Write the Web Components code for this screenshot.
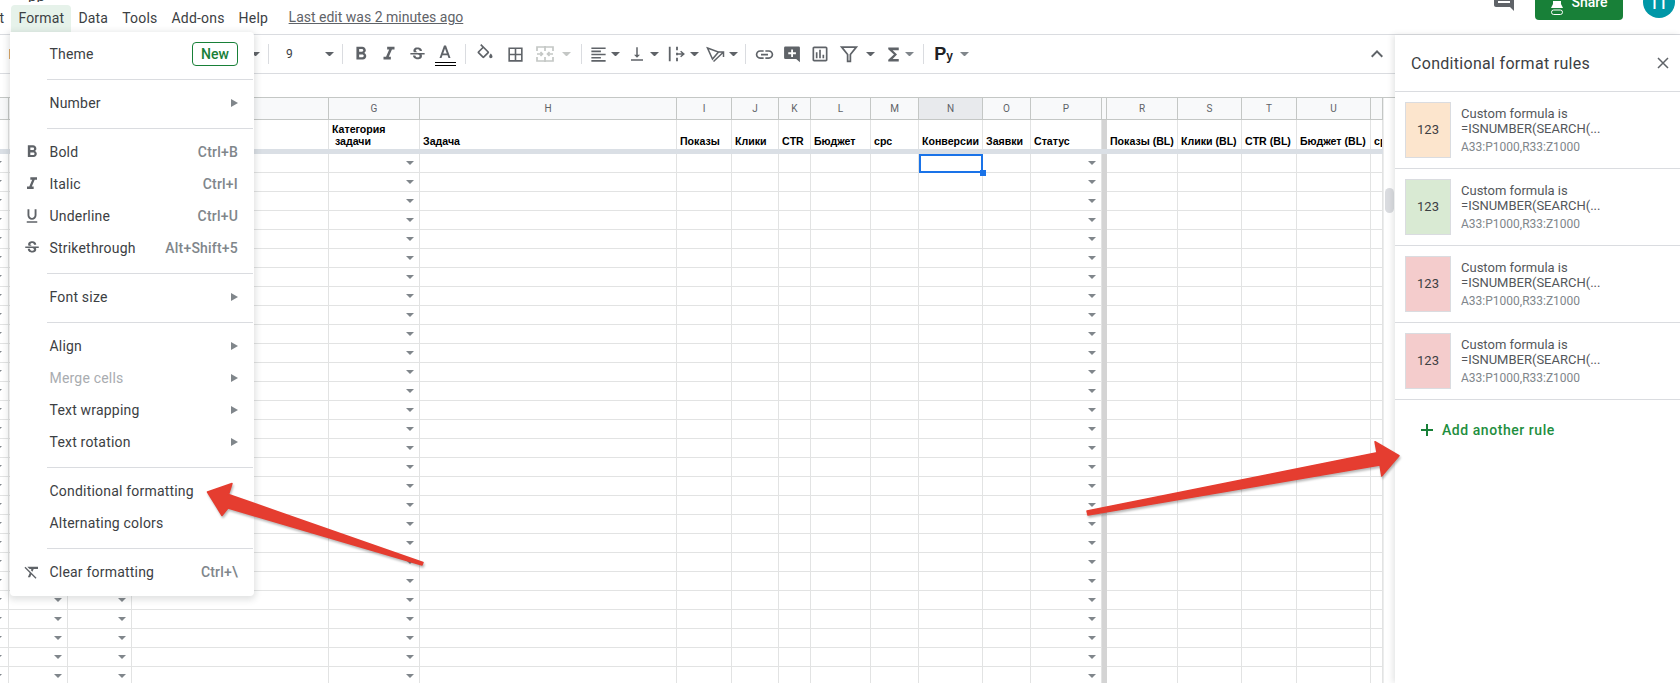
<!DOCTYPE html>
<html lang="en">
<head>
<meta charset="utf-8">
<title>Conditional format rules</title>
<style>
  html, body { margin: 0; height: 100%; overflow: hidden; background: #fff; }
  body { position: relative; width: 1680px; height: 683px; font-family: Roboto, "Liberation Sans", sans-serif; }
  .main { display: flex; height: 648px; }
  .left { width: 1395px; flex: none; display: flex; flex-direction: column; }
</style>
</head>
<body>
<gs-topbar></gs-topbar>
<div class="main">
  <div class="left">
    <gs-toolbar></gs-toolbar>
    <gs-grid></gs-grid>
  </div>
  <gs-rules-panel>
    <gs-rule color="#fce5cd"></gs-rule>
    <gs-rule color="#d9ead3"></gs-rule>
    <gs-rule color="#f4cccc"></gs-rule>
    <gs-rule color="#f4cccc"></gs-rule>
  </gs-rules-panel>
</div>
<gs-menu>
  <gs-menu-item>Theme<gs-badge slot="end">New</gs-badge></gs-menu-item>
  <gs-menu-sep></gs-menu-sep>
  <gs-menu-item submenu>Number</gs-menu-item>
  <gs-menu-sep></gs-menu-sep>
  <gs-menu-item icon="bold" size="20" shortcut="Ctrl+B">Bold</gs-menu-item>
  <gs-menu-item icon="italic" size="20" shortcut="Ctrl+I">Italic</gs-menu-item>
  <gs-menu-item icon="underline" shortcut="Ctrl+U">Underline</gs-menu-item>
  <gs-menu-item icon="strike" shortcut="Alt+Shift+5">Strikethrough</gs-menu-item>
  <gs-menu-sep></gs-menu-sep>
  <gs-menu-item submenu>Font size</gs-menu-item>
  <gs-menu-sep></gs-menu-sep>
  <gs-menu-item submenu>Align</gs-menu-item>
  <gs-menu-item submenu disabled>Merge cells</gs-menu-item>
  <gs-menu-item submenu>Text wrapping</gs-menu-item>
  <gs-menu-item submenu>Text rotation</gs-menu-item>
  <gs-menu-sep></gs-menu-sep>
  <gs-menu-item>Conditional formatting</gs-menu-item>
  <gs-menu-item>Alternating colors</gs-menu-item>
  <gs-menu-sep></gs-menu-sep>
  <gs-menu-item icon="clear" shortcut="Ctrl+\">Clear formatting</gs-menu-item>
</gs-menu>
<gs-arrows></gs-arrows>

<script>
// Material-style icon paths, viewBox 0 0 24 24
const ICONS = {
  bold: 'M15.6 10.79c.97-.67 1.65-1.77 1.65-2.79 0-2.26-1.75-4-4-4H7v14h7.04c2.09 0 3.71-1.7 3.71-3.79 0-1.52-.86-2.82-2.15-3.42zM10 6.5h3c.83 0 1.5.67 1.5 1.5s-.67 1.5-1.5 1.5h-3v-3zm3.5 9H10v-3h3.5c.83 0 1.5.67 1.5 1.5s-.67 1.5-1.5 1.5z',
  italic: 'M10 4v3h2.21l-3.42 8H6v3h8v-3h-2.21l3.42-8H18V4z',
  underline: 'M12 17c3.31 0 6-2.69 6-6V3h-2.5v8c0 1.93-1.57 3.5-3.5 3.5S8.5 12.93 8.5 11V3H6v8c0 3.31 2.69 6 6 6zm-7 2v2h14v-2H5z',
  strike: 'M7.24 8.75c-.26-.48-.39-1.03-.39-1.67 0-.61.13-1.16.4-1.67.26-.5.63-.93 1.11-1.29.48-.35 1.05-.63 1.7-.83.66-.19 1.39-.29 2.18-.29.81 0 1.54.11 2.21.34.66.22 1.23.54 1.69.94.47.4.83.88 1.08 1.43.25.55.38 1.15.38 1.81h-3.01c0-.31-.05-.59-.15-.85-.09-.27-.24-.49-.44-.68-.2-.19-.45-.33-.75-.44-.3-.1-.66-.16-1.06-.16-.39 0-.74.04-1.03.13-.29.09-.53.21-.72.36-.19.16-.34.34-.44.55-.1.21-.15.43-.15.66 0 .48.25.88.74 1.21.38.25.77.48 1.41.7H7.39c-.05-.08-.11-.17-.15-.25zM21 12v-2H3v2h9.62c.18.07.4.14.55.2.37.17.66.34.87.51.21.17.35.36.43.57.07.2.11.43.11.69 0 .23-.05.45-.14.66-.09.2-.23.38-.42.53-.19.15-.42.26-.71.35-.29.08-.63.13-1.01.13-.43 0-.83-.04-1.18-.13s-.66-.23-.91-.42c-.25-.19-.45-.44-.59-.75-.14-.31-.25-.76-.25-1.21H6.4c0 .55.08 1.13.24 1.58.16.45.37.85.65 1.21.28.35.6.66.98.92.37.26.78.48 1.22.65.44.17.9.3 1.38.39.48.08.96.13 1.44.13.8 0 1.53-.09 2.18-.28s1.21-.45 1.67-.79c.46-.34.82-.77 1.07-1.27s.38-1.07.38-1.71c0-.6-.1-1.14-.31-1.61-.05-.11-.11-.23-.17-.33H21z',
  clear: 'M6 5v.18L8.82 8h2.4l-.72 1.68 2.1 2.1L14.21 8H20V5H6zM3.27 5 2 6.27l6.97 6.97L6.5 19h3l1.57-3.66L16.73 21 18 19.73 3.55 5.27 3.27 5z',
  fill: 'M16.56 8.94 7.62 0 6.21 1.41l2.38 2.38-5.15 5.15c-.59.59-.59 1.54 0 2.12l5.5 5.5c.29.29.68.44 1.06.44s.77-.15 1.06-.44l5.5-5.5c.59-.58.59-1.53 0-2.12zM5.21 10 10 5.21 14.79 10H5.21zM19 11.5s-2 2.17-2 3.5c0 1.1.9 2 2 2s2-.9 2-2c0-1.33-2-3.5-2-3.5zM5.21 10h9.58L10 14.8z',
  borders: 'M3 3v18h18V3H3zm8 16H5v-6h6v6zm0-8H5V5h6v6zm8 8h-6v-6h6v6zm0-8h-6V5h6v6z',
  align: 'M15 15H3v2h12v-2zm0-8H3v2h12V7zM3 13h18v-2H3v2zm0 8h18v-2H3v2zM3 3v2h18V3H3z',
  valign: 'M16 13h-3V3h-2v10H8l4 4 4-4zM4 19v2h16v-2H4z',
  link: 'M3.9 12c0-1.71 1.39-3.1 3.1-3.1h4V7H7c-2.76 0-5 2.24-5 5s2.24 5 5 5h4v-1.9H7c-1.71 0-3.1-1.39-3.1-3.1zM8 13h8v-2H8v2zm9-6h-4v1.9h4c1.71 0 3.1 1.39 3.1 3.1s-1.39 3.1-3.1 3.1h-4V17h4c2.76 0 5-2.24 5-5s-2.24-5-5-5z',
  chart: 'M9 17H7v-7h2v7zm4 0h-2V7h2v10zm4 0h-2v-4h2v4zm2 2H5V5h14v14zm0-16H5c-1.1 0-2 .9-2 2v14c0 1.1.9 2 2 2h14c1.1 0 2-.9 2-2V5c0-1.1-.9-2-2-2z',
  sigma: 'M18 4H6v2l6.5 6L6 18v2h12v-3h-7l5-5-5-5h7z',
  addcomment: 'M4 3h16a1.5 1.5 0 0 1 1.5 1.5V22L17 18H4a1.5 1.5 0 0 1-1.5-1.5v-12A1.5 1.5 0 0 1 4 3zm7 3.5V10H7.5v2.2H11v3.5h2.2v-3.5h3.5V10h-3.5V6.5z',
  comment: 'M21.99 4c0-1.1-.89-2-1.99-2H4c-1.1 0-2 .9-2 2v12c0 1.1.9 2 2 2h14l4 4-.01-18zM18 14H6v-2h12v2zm0-3H6V9h12v2zm0-3H6V6h12v2z'
};

function icon(name, size, color) {
  return `<svg width="${size}" height="${size}" viewBox="0 0 24 24" fill="${color || '#5f6368'}" fill-rule="evenodd"><path d="${ICONS[name]}"/></svg>`;
}

class GsTopbar extends HTMLElement {
  constructor() {
    super();
    this.attachShadow({ mode: 'open' }).innerHTML = `
      <style>
        :host { display: flex; height: 34px; border-bottom: 1px solid #dadce0; font: 14px Roboto, sans-serif; color: #3c4043; }
        .left { display: flex; flex-direction: column; flex: none; }
        .title { height: 2px; margin-bottom: 3px; overflow: hidden; padding-left: 28px; font-size: 15px; color: #3c4043; }
        .title span { display: block; margin-top: -11px; line-height: 15px; }
        .bar { display: flex; align-items: center; height: 27px; margin-left: -39.700px; letter-spacing: .2px; }
        .bar span { padding: 0 7px; height: 27px; line-height: 27px; border-radius: 4px 4px 0 0; }
        .bar .on { background: #e6f2ea; width: 46px; }
        .bar .edit { margin: -2px 0 0 6.500px; padding-left: 7px; color: #5f6368; text-decoration: underline; letter-spacing: 0; }
        .right { margin-left: auto; display: flex; align-items: flex-start; }
        .comment { margin-top: -11px; height: 24px; }
        .share { width: 88px; height: 36px; margin: -16px 0 0 19px; background: #188038; border-radius: 4px; color: #fff; font-weight: 500;
          display: flex; align-items: center; justify-content: center; gap: 7px; }
        .avatar { width: 32px; height: 32px; margin: -14px 5px 0 20px; border-radius: 50%; background: #0097a7; color: #fff; font-size: 20px;
          display: flex; align-items: center; justify-content: center; }
      </style>
      <div class="left">
        <div class="title"><span>pp</span></div>
        <div class="bar">
          <span>Insert</span><span class="on">Format</span><span>Data</span><span>Tools</span><span>Add-ons</span><span>Help</span>
          <span class="edit">Last edit was 2 minutes ago</span>
        </div>
      </div>
      <div class="right">
        <div class="comment">${icon('comment', 24)}</div>
        <div class="share">
          <svg width="14" height="22" viewBox="0 0 14 22" style="margin-top:15px"><path d="M3 2h8v3l2 4H1l2-4z" fill="#fff"/><rect x="1.5" y="11" width="11" height="4.5" rx="2.2" fill="none" stroke="#fff"/></svg>
          <span>Share</span>
        </div>
        <div class="avatar">П</div>
      </div>`;
  }
}

class GsToolbar extends HTMLElement {
  constructor() {
    super();
    const sep = ml => `<i class="sep" style="margin-left:${ml}px"></i>`;
    const caret = (ml, cls = '') => `<i class="caret ${cls}" style="margin-left:${ml}px"></i>`;
    const btn = (svg, w, ml = 0) => `<span class="b" style="width:${w}px;margin-left:${ml}px">${svg}</span>`;
    const mbtn = (svg) => `<span class="mb"><span class="b" style="width:24px">${svg}</span><i class="caret" style="margin-left:1px"></i></span>`;
    const wrap = `<svg width="20" height="20" viewBox="0 0 22 22" fill="none" stroke="#5f6368" stroke-width="2"><path d="M3 3v16M11 3v4M11 9.500v3M11 15v4"/><path d="M11 11h7M15 8l3.500 3-3.500 3" stroke-width="1.600"/></svg>`;
    const rotate = `<svg width="19" height="17" viewBox="0 0 19 17" fill="none" stroke="#5f6368" stroke-width="1.500"><path d="M1.500 2l11 4-6 7z"/><path d="M7.500 15.500L17 6.500M12.500 6h5v5"/></svg>`;
    const merge = `<svg width="20" height="20" viewBox="0 0 20 20" fill="none" stroke="#c4c7c5" stroke-width="1.700"><path d="M2 7V3h16v4M2 13v4h16v-4M2 10h5M13 10h5M5.500 8l2 2-2 2M14.500 8l-2 2 2 2M10 2v5M10 13v5"/></svg>`;
    const colorA = `<svg width="24" height="30" viewBox="0 0 24 30"><path fill="#5f6368" d="M11 6.500 6.500 19h2l1-2.800h5l1 2.800h2L13 6.500zM10.200 14.500 12 9.400l1.800 5.100z"/><path fill="#000" d="M2 23h21v1H2zM2 26h21v1H2z"/></svg>`;
    const filter = `<svg width="22" height="22" viewBox="0 0 24 24" fill="none" stroke="#5f6368" stroke-width="1.900"><path d="M4 4.500h16l-6.500 8V20h-3v-7.500z"/></svg>`;
    this.attachShadow({ mode: 'open' }).innerHTML = `
      <style>
        :host { display: flex; align-items: center; flex: none; height: 38px; border-bottom: 1px solid #dadce0; font: 13px Roboto, sans-serif; color: #3c4043; position: relative; }
        i { display: block; flex: none; }
        .tick { width: 2px; height: 10px; background: #dba765; margin-left: 9px; }
        .sep { width: 1px; height: 20px; background: #dadce0; }
        .caret { width: 0; height: 0; border: 4px solid transparent; border-top-color: #5f6368; border-bottom: 0; margin-right: 1px; padding-left: 1px; }
        .caret.s { border-top-color: #80868b; margin-right: 1px; }
        .caret.d { border-top-color: #c4c7c5; }
        .b { display: flex; flex: none; align-items: center; justify-content: center; }
        .mb { display: flex; flex: none; width: 39.33px; align-items: center; }
        .fs { display: flex; flex: none; width: 66px; padding-left: 17px; box-sizing: border-box; align-items: center; justify-content: space-between; font-size: 12px; color: #3c4043; }
        .ru { width: 30px; margin-left: 5px; flex: none; text-align: center; font: 700 18px "Liberation Sans", sans-serif; color: #202124; white-space: nowrap; }
        .ru small { font-size: 12px; }
        .up { margin-left: auto; margin-right: 6px; }
      </style>
      <i class="tick"></i>
      ${caret(240)}
      ${sep(7)}
      <span class="fs"><span>9</span><i class="caret"></i></span>
      ${sep(7)}
      ${btn(icon('bold', 22), 28, 4)}${btn(icon('italic', 22), 28)}${btn(icon('strike', 19), 28)}${btn(colorA, 28)}
      ${sep(5.5)}
      ${btn(icon('fill', 20), 30, 4.5)}${btn(icon('borders', 19), 30)}${btn(merge, 30)}${caret(2, 'd')}
      ${sep(8.5)}
      <span style="margin-left:4.5px"></span>
      ${mbtn(icon('align', 19))}${mbtn(icon('valign', 18))}${mbtn(wrap)}${mbtn(rotate)}
      ${sep(1.2)}
      ${btn(icon('link', 21), 28, 4.5)}${btn(icon('addcomment', 20), 28)}${btn(icon('chart', 20), 28)}
      ${btn(filter, 28, 1)}${caret(3)}
      ${btn(icon('sigma', 21), 24, 5)}${caret(0, 's')}
      ${sep(7.5)}
      <span class="ru">Р<small>у</small></span>${caret(1, 's')}
      <svg class="up" width="24" height="24" viewBox="0 0 24 24" fill="#5f6368"><path d="M7.410 15.410 12 10.830l4.590 4.580L18 14l-6-6-6 6z"/></svg>`;
  }
}

// widths of the sheet columns, left to right, with their letter and header text
const COLUMNS = [
  { w: 9 }, { w: 59, caret: 1 }, { w: 64, caret: 1 }, { w: 197 },
  { w: 91, l: 'G', caret: 1, t: 'Категория<br>&nbsp;задачи' },
  { w: 257, l: 'H', t: 'Задача' },
  { w: 55, l: 'I', t: 'Показы' }, { w: 47, l: 'J', t: 'Клики' }, { w: 32, l: 'K', t: 'CTR' },
  { w: 60, l: 'L', t: 'Бюджет' }, { w: 48, l: 'M', t: 'cpc' }, { w: 64, l: 'N', t: 'Конверсии', active: 1 },
  { w: 48, l: 'O', t: 'Заявки' }, { w: 71, l: 'P', caret: 1, t: 'Статус' },
  { w: 5, freeze: 1 },
  { w: 71, l: 'R', t: 'Показы (BL)' }, { w: 64, l: 'S', t: 'Клики (BL)' }, { w: 55, l: 'T', t: 'CTR (BL)' },
  { w: 74, l: 'U', t: 'Бюджет (BL)' }, { w: 12, l: '', t: 'срс' }
];
const ROWS = 28;

class GsGrid extends HTMLElement {
  constructor() {
    super();
    let html = '';
    COLUMNS.forEach(c => {
      html += `<div class="let${c.active ? ' act' : ''}">${c.l || ''}</div>`;
    });
    COLUMNS.forEach(c => {
      html += c.freeze ? '<div class="fz"></div>' : `<div class="hd">${c.t ? `<span>${c.t}</span>` : ''}</div>`;
    });
    html += '<div class="band"></div>';
    for (let r = 0; r < ROWS; r++) {
      COLUMNS.forEach((c, i) => {
        if (c.freeze) { html += '<div class="fz"></div>'; return; }
        const sel = r === 0 && c.active;
        const first = i === 0;
        html += `<div class="c${sel ? ' sel' : ''}">${c.caret || first ? `<i class="${first ? 'far' : ''}"></i>` : ''}${sel ? '<b></b>' : ''}</div>`;
      });
    }
    this.attachShadow({ mode: 'open' }).innerHTML = `
      <style>
        :host { display: flex; flex: 1; min-height: 0; margin-top: 23px; border-top: 1px solid #c4c7c5; overflow: hidden; }
        .sheet { display: grid; flex: none; width: 1383px; grid-template-columns: ${COLUMNS.map(c => c.w + 'px').join(' ')}; grid-auto-rows: 19px; grid-template-rows: 22px 29px 5px; }
        .sheet > div { box-sizing: border-box; overflow: hidden; }
        .let { background: #f8f9fa; border-right: 1px solid #c4c7c5; border-bottom: 1px solid #c4c7c5; font: 10px/21px Roboto, sans-serif; color: #5f6368; text-align: center; }
        .let.act { background: #e8eaed; }
        .hd { border-right: 1px solid #e2e3e3; display: flex; align-items: flex-end; padding: 0 0 2px 3px; font: 700 10.600px/12px "Liberation Sans", sans-serif; color: #000; white-space: nowrap; }
        .fz { background: #d4d4d4; }
        .band { grid-column: 1 / -1; background: #dadfe5; }
        .c { position: relative; border-right: 1px solid #e2e3e3; border-bottom: 1px solid #e2e3e3; }
        .c i { position: absolute; right: 5px; top: 7px; border: 4px solid transparent; border-top-color: #80868b; border-bottom: 0; }
        .c i.far { right: auto; left: -6px; }
        .sheet > .c.sel { overflow: visible; border: 2px solid #1a73e8; }
        .sel b { position: absolute; right: -5px; bottom: -5px; width: 6px; height: 6px; background: #1a73e8; z-index: 1; }
        .scroll { flex: 1; padding-top: 90px; border-left: 1px solid #eceded; }
        .thumb { width: 9px; height: 25px; margin-left: 1px; border-radius: 5px; background: #dadce0; }
      </style>
      <div class="sheet">${html}</div>
      <div class="scroll"><div class="thumb"></div></div>`;
  }
}

class GsMenu extends HTMLElement {
  constructor() {
    super();
    this.attachShadow({ mode: 'open' }).innerHTML = `
      <style>
        :host { position: absolute; left: 10px; top: 32px; width: 244px; box-sizing: border-box; padding: 6px 0 8px; background: #fff;
          border-radius: 0 4px 4px 4px; box-shadow: 0 2px 6px 2px rgba(60,64,67,.15); font: 14px Roboto, sans-serif; letter-spacing: .2px; color: #3c4043; }
      </style>
      <slot></slot>`;
  }
}

class GsMenuItem extends HTMLElement {
  constructor() {
    super();
    const ic = this.getAttribute('icon');
    const sc = this.getAttribute('shortcut');
    const size = this.getAttribute('size') || 18;
    this.attachShadow({ mode: 'open' }).innerHTML = `
      <style>
        :host { display: flex; align-items: center; height: 32px; padding-right: 16px; }
        :host([disabled]) { color: #a9acb0; }
        .ic { display: flex; flex: none; width: 39.500px; height: 20px; align-items: center; justify-content: center; padding-left: 4.500px; box-sizing: border-box; }
        .txt { flex: 1; }
        .sc { color: #80868b; font-weight: 500; }
        .tri { width: 0; height: 0; border-left: 7px solid #80868b; border-top: 4px solid transparent; border-bottom: 4px solid transparent; }
      </style>
      <span class="ic">${ic ? icon(ic, size) : ''}</span>
      <span class="txt"><slot></slot></span>
      ${sc ? `<span class="sc">${sc}</span>` : ''}
      ${this.hasAttribute('submenu') ? '<i class="tri"></i>' : ''}
      <slot name="end"></slot>`;
  }
}

class GsMenuSep extends HTMLElement {
  constructor() {
    super();
    this.attachShadow({ mode: 'open' }).innerHTML = `
      <style>:host { display: block; height: 1px; margin: 9px 1px 7px 37px; background: #dadce0; }</style>`;
  }
}

class GsBadge extends HTMLElement {
  constructor() {
    super();
    this.attachShadow({ mode: 'open' }).innerHTML = `
      <style>
        :host { display: block; box-sizing: border-box; width: 46px; height: 24px; border: 1px solid #188038; border-radius: 4px; color: #188038; font-weight: 500; line-height: 22px; text-align: center; letter-spacing: 0; }
      </style>
      <slot></slot>`;
  }
}

class GsRulesPanel extends HTMLElement {
  constructor() {
    super();
    this.attachShadow({ mode: 'open' }).innerHTML = `
      <style>
        :host { display: block; flex: 1; position: relative; background: #fff; box-shadow: -2px 0 6px rgba(60,64,67,.14); font-family: Roboto, sans-serif; }
        header { display: flex; align-items: center; justify-content: space-between; height: 56px; padding: 0 7px 0 16px; border-bottom: 1px solid #dadce0; font-size: 16px; letter-spacing: .3px; color: #3c4043; }
        .add { display: flex; align-items: center; gap: 9px; height: 60px; padding-left: 26px; font-size: 14px; font-weight: 500; letter-spacing: .55px; color: #1e8e3e; }
      </style>
      <header>
        <span>Conditional format rules</span>
        <svg width="20" height="20" viewBox="0 0 20 20" fill="none" stroke="#5f6368" stroke-width="1.500"><path d="M5 5l10 10M15 5L5 15"/></svg>
      </header>
      <slot></slot>
      <div class="add">
        <svg width="12" height="12" viewBox="0 0 12 12" fill="#188038"><path d="M5 0h2v5h5v2H7v5H5V7H0V5h5z"/></svg>
        <span>Add another rule</span>
      </div>`;
  }
}

class GsRule extends HTMLElement {
  constructor() {
    super();
    this.attachShadow({ mode: 'open' }).innerHTML = `
      <style>
        :host { display: flex; box-sizing: border-box; height: 77px; padding: 10px; border-bottom: 1px solid #dadce0; color: #3c4043; }
        .sw { flex: none; box-sizing: border-box; width: 46px; height: 56px; border: 1px solid #dadce0; font-size: 13px; line-height: 54px; text-align: center; background: var(--c); }
        .tx { margin-left: 10px; font-size: 13px; line-height: 15px; color: #54575b; padding-top: 4px; }
        .tx div { white-space: nowrap; }
        .rg { font-size: 12px; color: #80868b; margin-top: 4px; }
      </style>
      <div class="sw" style="--c:${this.getAttribute('color')}">123</div>
      <div class="tx">
        <div>Custom formula is</div>
        <div>=ISNUMBER(SEARCH(...</div>
        <div class="rg">A33:P1000,R33:Z1000</div>
      </div>`;
  }
}

class GsArrows extends HTMLElement {
  constructor() {
    super();
    this.attachShadow({ mode: 'open' }).innerHTML = `
      <style>
        :host { position: absolute; left: 0; top: 0; width: 1680px; height: 683px; pointer-events: none; }
        svg { display: block; filter: drop-shadow(1px 2px 1px rgba(0,0,0,.28)); }
      </style>
      <svg width="1680" height="683" viewBox="0 0 1680 683" fill="#e53d30" stroke="#e53d30" stroke-width="1.500" stroke-linejoin="round">
        <path d="M207.500 492 232 483.500 228.500 494.500 423 562.500 422 565 228 508 222 515.500z"/>
        <path d="M1399 455.700 1375 441.700 1377 452.700 1087 511 1088 515 1380 465 1381.700 476z"/>
      </svg>`;
  }
}

customElements.define('gs-topbar', GsTopbar);
customElements.define('gs-toolbar', GsToolbar);
customElements.define('gs-grid', GsGrid);
customElements.define('gs-menu', GsMenu);
customElements.define('gs-menu-item', GsMenuItem);
customElements.define('gs-menu-sep', GsMenuSep);
customElements.define('gs-badge', GsBadge);
customElements.define('gs-rules-panel', GsRulesPanel);
customElements.define('gs-rule', GsRule);
customElements.define('gs-arrows', GsArrows);
</script>
</body>
</html>
